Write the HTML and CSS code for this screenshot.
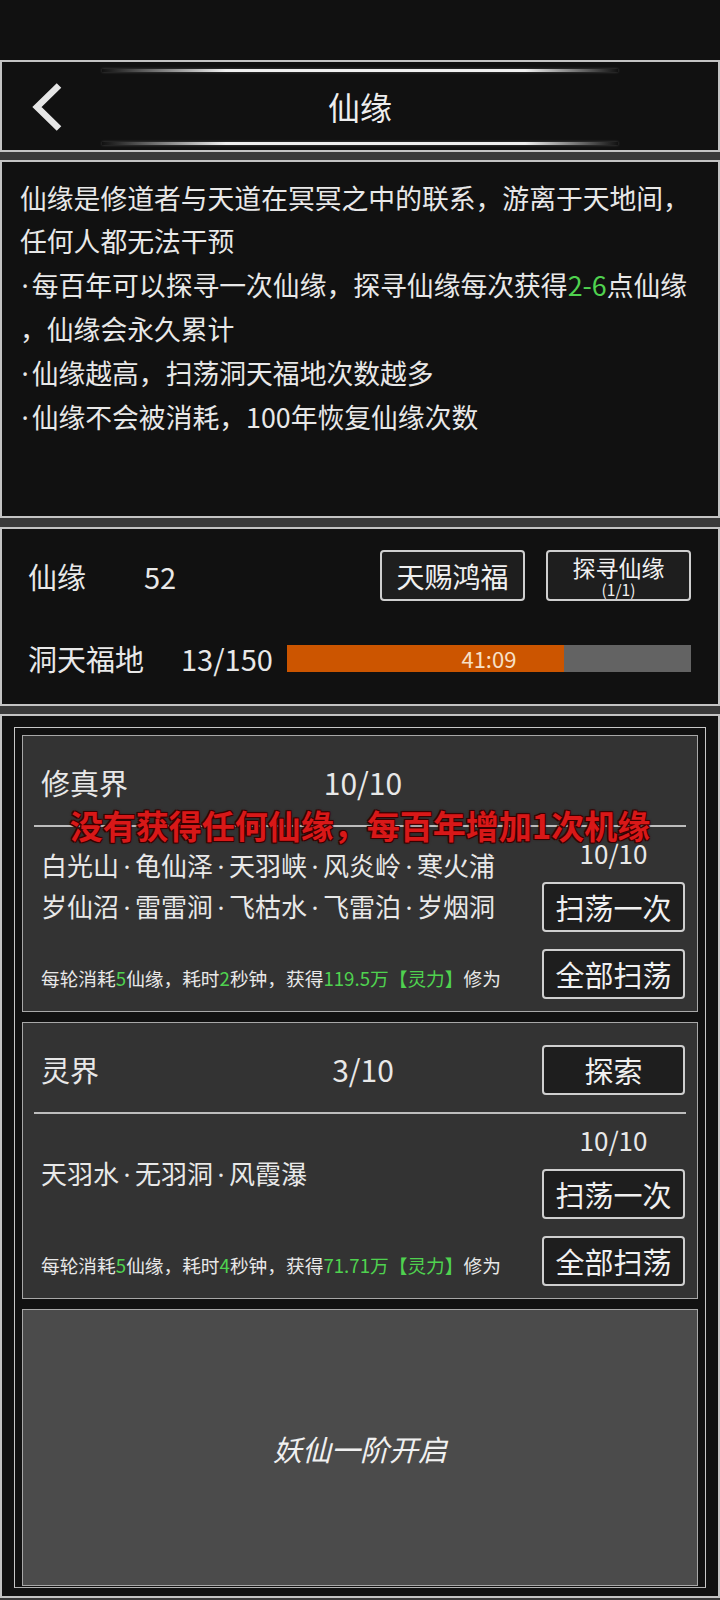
FILE: index.html
```html
<!DOCTYPE html>
<html lang="zh-CN">
<head>
    <meta charset="UTF-8">
    <meta name="viewport" content="width=device-width, initial-scale=1.0">
    <title>仙缘</title>
    <link rel="stylesheet" href="styles.css">
</head>
<body>
    <div class="status"></div>

    <div class="header">
        <div class="glow"></div>
        <div class="head-row">
            <div class="back">
                <svg width="40" height="56" viewBox="0 0 40 56">
                    <polyline points="31,6.5 9,28 31,49.5" fill="none" stroke="#e6e6e6" stroke-width="6.5"/>
                </svg>
            </div>
            <div class="title">仙缘</div>
        </div>
        <div class="glow"></div>
    </div>

    <div class="info">
        仙缘是修道者与天道在冥冥之中的联系，游离于天地间，<br>
        任何人都无法干预<br>
        <span class="dot">·</span>每百年可以探寻一次仙缘，探寻仙缘每次获得<span class="green">2-6</span>点仙缘<br>
        ，仙缘会永久累计<br>
        <span class="dot">·</span>仙缘越高，扫荡洞天福地次数越多<br>
        <span class="dot">·</span>仙缘不会被消耗，100年恢复仙缘次数
    </div>

    <div class="stats">
        <div class="stat-row">
            <span class="stat-label">仙缘</span>
            <span class="stat-value">52</span>
            <div class="stat-actions">
                <div class="btn btn-stat">天赐鸿福</div>
                <div class="btn btn-stat btn-two">
                    <span class="btn-main">探寻仙缘</span>
                    <span class="btn-sub">(1/1)</span>
                </div>
            </div>
        </div>
        <div class="stat-row row-bar">
            <span class="stat-label wide">洞天福地</span>
            <span class="stat-value">13/150</span>
            <div class="bar">
                <div class="bar-fill" style="width: 68.5%"></div>
                <div class="bar-text">41:09</div>
            </div>
        </div>
    </div>

    <div class="main">
        <div class="frame">
            <div class="card">
                <div class="card-head">
                    <span class="card-title">修真界</span>
                    <span class="card-count">10/10</span>
                    <span></span>
                </div>
                <div class="divider"></div>
                <div class="card-body">
                    <div class="card-left">
                        <div class="places">
                            <div>白光山<span class="dot">·</span>龟仙泽<span class="dot">·</span>天羽峡<span class="dot">·</span>风炎岭<span class="dot">·</span>寒火浦</div>
                            <div>岁仙沼<span class="dot">·</span>雷雷涧<span class="dot">·</span>飞枯水<span class="dot">·</span>飞雷泊<span class="dot">·</span>岁烟洞</div>
                        </div>
                        <div class="cost">每轮消耗<span class="green">5</span>仙缘，耗时<span class="green">2</span>秒钟，获得<span class="green">119.5万【灵力】</span>修为</div>
                    </div>
                    <div class="card-right">
                        <div class="sweep-count">10/10</div>
                        <div class="btn btn-card">扫荡一次</div>
                        <div class="btn btn-card">全部扫荡</div>
                    </div>
                </div>
                <div class="toast">没有获得任何仙缘，每百年增加1次机缘</div>
            </div>

            <div class="card">
                <div class="card-head">
                    <span class="card-title">灵界</span>
                    <span class="card-count">3/10</span>
                    <div class="btn btn-card btn-explore">探索</div>
                </div>
                <div class="divider"></div>
                <div class="card-body">
                    <div class="card-left">
                        <div class="places">
                            <div>天羽水<span class="dot">·</span>无羽洞<span class="dot">·</span>风霞瀑</div>
                        </div>
                        <div class="cost">每轮消耗<span class="green">5</span>仙缘，耗时<span class="green">4</span>秒钟，获得<span class="green">71.71万【灵力】</span>修为</div>
                    </div>
                    <div class="card-right">
                        <div class="sweep-count">10/10</div>
                        <div class="btn btn-card">扫荡一次</div>
                        <div class="btn btn-card">全部扫荡</div>
                    </div>
                </div>
            </div>

            <div class="card locked">
                <div class="locked-text">妖仙一阶开启</div>
            </div>
        </div>
    </div>
</body>
</html>
```

FILE: styles.css
```css
*{
    box-sizing: border-box;
}
body{
    margin: 0;
    background-color: #3a3a3a;
    color: #e8e8e8;
    font-family: "Noto Sans CJK SC", "Noto Sans", sans-serif;
}
.green{
    color: #4fd24f;
}
.dot{
    font-family: "Noto Sans", sans-serif;
    padding: 0 4.5px;
}
.status{
    height: 60px;
    background-color: #111;
}

/* header */
.header{
    height: 92px;
    background-color: #111;
    border: 2px solid #c4c4c4;
    display: flex;
    flex-direction: column;
    padding: 7px 0 5px;
    margin-bottom: 8px;
}
.glow{
    height: 3px;
    margin: 0 100px;
    background: linear-gradient(90deg, rgba(255,255,255,0) 0%, #f0f0f0 24%, #f0f0f0 82%, rgba(255,255,255,0) 100%);
    box-shadow: 0 0 3px rgba(255,255,255,0.25);
}
.head-row{
    flex: 1;
    display: grid;
    grid-template-columns: 1fr auto 1fr;
    align-items: center;
}
.back{
    padding-left: 26px;
    display: flex;
}
.title{
    font-size: 32px;
    line-height: 40px;
    color: #eee;
    margin-top: -3px;
}

/* description */
.info{
    height: 358px;
    background-color: #111;
    border: 2px solid #c4c4c4;
    padding: 14px 0 0 18px;
    font-size: 26.8px;
    line-height: 43.4px;
    white-space: nowrap;
    margin-bottom: 9px;
}
.info .dot{
    padding: 0 3px 0 1.5px;
}

/* stats */
.stats{
    height: 179px;
    background-color: #111;
    border: 2px solid #c4c4c4;
    padding: 21px 27px 0 26px;
    margin-bottom: 8px;
}
.stat-row{
    display: flex;
    align-items: center;
    height: 51px;
    font-size: 29px;
}
.row-bar{
    height: 40px;
    margin-top: 37px;
}
.stat-label{
    width: 116px;
}
.stat-label.wide{
    width: 153px;
}
.stat-actions{
    margin-left: auto;
    display: flex;
    gap: 21px;
}
.btn{
    background-color: #1e1e1e;
    border: 2px solid #cfcfcf;
    border-radius: 4px;
    display: flex;
    align-items: center;
    justify-content: center;
    color: #f0f0f0;
}
.btn-stat{
    width: 145px;
    height: 51px;
    font-size: 28px;
}
.btn-two{
    flex-direction: column;
    padding-top: 2px;
}
.btn-main{
    font-size: 23px;
    line-height: 25px;
}
.btn-sub{
    font-size: 15.5px;
    line-height: 19px;
}
.bar{
    flex: 1;
    height: 27px;
    margin-left: 14px;
    background-color: #636363;
    display: grid;
}
.bar-fill{
    grid-area: 1 / 1;
    background-color: #cc5500;
}
.bar-text{
    grid-area: 1 / 1;
    place-self: center;
    font-size: 22px;
    line-height: 27px;
    color: #f7e0c8;
}

/* sweep list */
.main{
    height: 884px;
    background-color: #111;
    border: 2px solid #c4c4c4;
    padding: 11px 12px 9px;
}
.frame{
    height: 861px;
    border: 1px solid #c8c8c8;
    border-bottom-color: #b0b0b0;
    padding: 7px 7px 0;
    display: flex;
    flex-direction: column;
    gap: 10px;
    overflow: hidden;
}
.card{
    position: relative;
    flex: none;
    height: 277px;
    background-color: #333;
    border: 1px solid #a8a8a8;
}
.card-head{
    height: 89px;
    padding: 2px 12px 0 18px;
    display: grid;
    grid-template-columns: 1fr auto 1fr;
    align-items: center;
    font-size: 29px;
}
.card-count{
    font-size: 30px;
}
.card-head .btn{
    justify-self: end;
    margin-top: 2px;
}
.divider{
    height: 2px;
    margin: 0 11px;
    background-color: #bdbdbd;
}
.card-body{
    display: flex;
    padding: 0 12px 0 18px;
}
.card-left{
    flex: 1;
}
.places{
    height: 118px;
    display: flex;
    flex-direction: column;
    justify-content: center;
    font-size: 26px;
    line-height: 39px;
    white-space: nowrap;
}
.cost{
    margin-top: 18px;
    font-size: 18.7px;
    line-height: 30px;
    white-space: nowrap;
}
.card-right{
    width: 143px;
    padding-top: 6px;
    display: flex;
    flex-direction: column;
}
.sweep-count{
    height: 40px;
    line-height: 40px;
    text-align: center;
    font-size: 26px;
    margin-bottom: 9px;
}
.btn-card{
    width: 143px;
    height: 50px;
    font-size: 29px;
}
.btn-card + .btn-card{
    margin-top: 17px;
}
.toast{
    position: absolute;
    left: 0;
    right: 0;
    top: 69px;
    text-align: center;
    font-size: 33px;
    line-height: 40px;
    font-weight: 700;
    color: #d81818;
    white-space: nowrap;
    text-shadow: 1px 1px 0 #3a0000, -1px -1px 0 #3a0000, 1px -1px 0 #3a0000, -1px 1px 0 #3a0000, 0 0 3px #200;
}
.locked{
    background-color: #4b4b4b;
    display: flex;
    align-items: center;
    justify-content: center;
}
.locked-text{
    font-size: 29px;
    font-style: italic;
    color: #f0f0f0;
}
```
